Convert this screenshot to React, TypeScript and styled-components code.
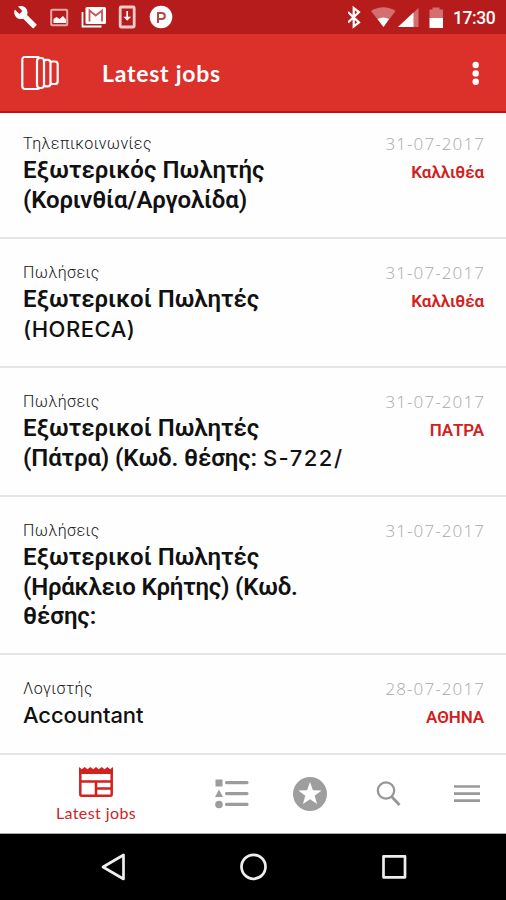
import React from "react";
import styled, { createGlobalStyle } from "styled-components";

const GlobalStyle = createGlobalStyle`
  * { box-sizing: border-box; }
  body { margin: 0; background: #fff; overflow: hidden; }
`;

const Screen = styled.div`
  width: 506px;
  height: 900px;
  display: flex;
  flex-direction: column;
  overflow: hidden;
  background: #fefefe;
  font-family: Roboto, "Noto Sans", sans-serif;
`;

const StatusBar = styled.div`
  height: 34px;
  flex: none;
  display: flex;
  justify-content: space-between;
  background: #b61c1c;
  color: #fff;
  svg { display: block; }
`;

const Clock = styled.span`
  width: 53px;
  padding: 8px 0 0 0;
  font-size: 17.5px;
  font-weight: 500;
  line-height: 20px;
  letter-spacing: -0.4px;
`;

const StatusRight = styled.div`
  display: flex;
`;

const AppBar = styled.header`
  height: 79px;
  flex: none;
  display: flex;
  align-items: center;
  padding: 0 20px 0 20px;
  background: #dc302b;
  border-bottom: 2px solid #c01612;
  color: #fff;
`;

const AppTitle = styled.h1`
  margin: 1px 0 0 42px;
  flex: 1;
  font-family: Lato, sans-serif;
  font-size: 23px;
  font-weight: 700;
  line-height: 28px;
  letter-spacing: 0.75px;
`;

const Jobs = styled.main`
  height: 642px;
  flex: none;
  overflow: hidden;
`;

const Job = styled.article<{ $height: number; $first?: boolean }>`
  height: ${(p) => p.$height}px;
  padding: ${(p) => (p.$first ? 21 : 24)}px 22px 0 23px;
  display: flex;
  justify-content: space-between;
  border-bottom: 2px solid #e5e5e5;
`;

const Details = styled.div`
  white-space: nowrap;
`;

const Category = styled.div`
  font-size: 16px;
  line-height: 20px;
  font-weight: 350;
  letter-spacing: 0.45px;
  color: #161616;
`;

const Title = styled.h2`
  margin: 2px 0 0;
  font-size: 24px;
  line-height: 29.5px;
  font-weight: 600;
  color: #111;
`;

const Line = styled.div<{ $spacing?: number }>`
  letter-spacing: ${(p) => p.$spacing ?? 0}px;
`;

const Latin = styled.span<{ $spacing?: number }>`
  font-family: Inter, Lato, sans-serif;
  font-size: 22px;
  font-weight: 500;
  letter-spacing: ${(p) => p.$spacing ?? 0}px;
`;

const Meta = styled.div`
  text-align: right;
  white-space: nowrap;
`;

const PostedOn = styled.div`
  margin-right: -1px;
  font-family: "Open Sans", sans-serif;
  font-weight: 300;
  font-size: 17px;
  line-height: 20px;
  letter-spacing: 1.1px;
  color: #a8a8a8;
`;

const City = styled.div`
  margin-top: 8px;
  font-size: 17px;
  line-height: 20px;
  font-weight: 600;
  letter-spacing: -0.1px;
  color: #d3201d;
`;

const TabBar = styled.nav`
  height: 79px;
  flex: none;
  display: grid;
  grid-template-columns: 192px 79px 78px 79px 78px;
  background: #fff;
  border-bottom: 1px solid #aaa;
`;

const Tab = styled.button`
  display: flex;
  flex-direction: column;
  align-items: center;
  justify-content: center;
  padding: 0;
  border: 0;
  background: none;
  color: #d3221e;
`;

const TabLabel = styled.span`
  margin-top: 4px;
  font-family: Lato, sans-serif;
  font-size: 16px;
  line-height: 21px;
  letter-spacing: 0.4px;
`;

const SystemBar = styled.footer`
  height: 66px;
  flex: none;
  background: #000;
`;

type TitleLine = { text: string; latin?: string; spacing?: number; latinSpacing?: number };

const jobs: { category: string; lines: TitleLine[]; date: string; city?: string; height: number }[] = [
  {
    category: "Τηλεπικοινωνίες",
    lines: [{ text: "Εξωτερικός Πωλητής", spacing: 0.03 }, { text: "(Κορινθία/Αργολίδα)", spacing: -0.13 }],
    date: "31-07-2017",
    city: "Καλλιθέα",
    height: 126,
  },
  {
    category: "Πωλήσεις",
    lines: [{ text: "Εξωτερικοί Πωλητές" }, { text: "", latin: "(HORECA)", latinSpacing: 0.5 }],
    date: "31-07-2017",
    city: "Καλλιθέα",
    height: 129,
  },
  {
    category: "Πωλήσεις",
    lines: [
      { text: "Εξωτερικοί Πωλητές" },
      { text: "(Πάτρα) (Κωδ. θέσης: ", spacing: -0.1, latin: "S-722/", latinSpacing: 1.5 },
    ],
    date: "31-07-2017",
    city: "ΠΑΤΡΑ",
    height: 129,
  },
  {
    category: "Πωλήσεις",
    lines: [
      { text: "Εξωτερικοί Πωλητές" },
      { text: "(Ηράκλειο Κρήτης) (Κωδ.", spacing: -0.2 },
      { text: "θέσης:", spacing: -0.05 },
    ],
    date: "31-07-2017",
    height: 158,
  },
  {
    category: "Λογιστής",
    lines: [{ text: "", latin: "Accountant", latinSpacing: -0.1 }],
    date: "28-07-2017",
    city: "ΑΘΗΝΑ",
    height: 100,
  },
];

const Notifications = () => (
  <svg width="180" height="34" viewBox="0 0 180 34" fill="none">
    <g transform="translate(13.2 4.8) scale(1.02)">
      <path fill="#fff" d="M22.7 19l-9.1-9.1c.9-2.3.4-5-1.5-6.9-2-2-5-2.4-7.4-1.3L9 6 6 9 1.6 4.7C.4 7.1.9 10.1 2.9 12.1c1.9 1.9 4.6 2.4 6.9 1.5l9.1 9.1c.4.4 1 .4 1.4 0l2.3-2.3c.5-.4.5-1.1.1-1.4z" />
    </g>
    <rect x="51.2" y="9.7" width="16" height="15.6" rx="1" stroke="#eba9a7" strokeWidth="2" />
    <path d="M53.500 23v-4l3-2 3 2 3.500-3 3 3.500V23z" fill="#fff" />
    <path d="M82.500 12v14.500h19" stroke="#fff" strokeWidth="1.800" />
    <rect x="85.500" y="7" width="20.500" height="17" rx="1.500" fill="#fff" />
    <path d="M89.500 21.500V10.500l6.200 5 6.300-5v11" stroke="#c85656" strokeWidth="1.800" />
    <rect x="120.200" y="7" width="14" height="20" rx="1" stroke="#f5cbc9" strokeWidth="2.800" />
    <path d="M127.200 11v8M125.300 17.500l1.900 2 1.900-2z" fill="#fff" stroke="#fff" strokeWidth="1.700" />
    <circle cx="161" cy="17" r="11.300" fill="#fff" />
    <path d="M158 23V13h3.800a3 3 0 0 1 0 6H158" stroke="#b84545" strokeWidth="2" />
  </svg>
);

const Connectivity = () => (
  <svg width="105" height="34" viewBox="348 0 105 34" fill="none">
    <path d="M348 12l11 10.500-5.300 4V8l5.300 4-11 10.500" stroke="#fff" strokeWidth="2.200" />
    <path d="M371 11q12.500-7.500 24.500 0L383.500 27z" fill="#d3706f" />
    <path d="M377.500 19q6-3 11.500 0L383.500 27z" fill="#fff" />
    <path d="M418.500 8v19H398z" fill="#d3706f" />
    <path d="M413.500 12.500V27H398z" fill="#fff" />
    <path d="M429.500 9.500h3V7.500h7v2h3.500V19h-13.500z" fill="#d3706f" />
    <path d="M429.500 18H443v10h-13.500z" fill="#fff" />
  </svg>
);

const BrandMark = () => (
  <svg width="40" height="36" viewBox="0 0 40 36" fill="#dc302b" stroke="#fff" strokeWidth="2.200">
    <rect x="2.300" y="2" width="17.500" height="32" rx="2.500" />
    <rect x="29.500" y="6.500" width="8.200" height="22.500" rx="2.800" />
    <rect x="23.500" y="4.800" width="7" height="26.500" rx="2.800" />
    <rect x="17" y="3" width="7" height="30" rx="3" />
  </svg>
);

const MoreIcon = () => (
  <svg width="20" height="28" viewBox="0 0 20 28" fill="#fff">
    <circle cx="9.700" cy="6" r="3.200" />
    <circle cx="9.700" cy="14.400" r="3.200" />
    <circle cx="9.700" cy="22.800" r="3.200" />
  </svg>
);

const NewspaperIcon = () => (
  <svg width="36" height="32" viewBox="0 0 36 32" fill="none">
    <path fill="#d3221e" d="M1 1l2.800 2.300L6.700 1l2.800 2.300L12.400 1l2.800 2.300L18 1l2.800 2.300L23.700 1l2.800 2.300L29.400 1l2.800 2.300L35 1v7H1z" />
    <path d="M2.300 4v24.200q0 1.500 1.500 1.500h28.400q1.500 0 1.500-1.500V4M2 15.500h32M18 15.500v14M18 22.500h16" stroke="#d3221e" strokeWidth="2.500" />
  </svg>
);

const ListIcon = () => (
  <svg width="36" height="32" viewBox="0 0 36 32" fill="#9c9c9c">
    <path d="M1.500 1.500h7v7h-7zM5 11.500l4 7.500H1z" />
    <circle cx="5" cy="26.500" r="3.800" />
    <path d="M12.500 4.600h20.500M12.500 15.600h20.500M12.500 26.400h20.500" stroke="#9c9c9c" strokeWidth="3.200" strokeLinecap="round" />
  </svg>
);

const StarIcon = () => (
  <svg width="36" height="36" viewBox="0 0 36 36">
    <circle cx="18" cy="18" r="17" fill="#9e9e9e" />
    <path fill="#fff" d="M18 6l2.900 8.200 8.700.2-6.900 5.300 2.400 8.300-7.100-4.800-7.100 4.800 2.400-8.300-6.900-5.300 8.700-.2z" />
  </svg>
);

const SearchIcon = () => (
  <svg width="26" height="26" viewBox="0 0 26 26" fill="none" stroke="#969696" strokeWidth="2.300">
    <circle cx="10" cy="9.500" r="8.200" />
    <path d="M15.500 15.500l8 8.500" strokeWidth="2.800" />
  </svg>
);

const MenuIcon = () => (
  <svg width="28" height="20" viewBox="0 0 28 20" stroke="#999" strokeWidth="2.700">
    <path d="M1 2.500h26M1 9.700h26M1 16.700h26" />
  </svg>
);

const SystemKeys = () => (
  <svg width="506" height="66" viewBox="0 834 506 66" fill="none" stroke="#eee" strokeWidth="2.700" strokeLinejoin="round">
    <path d="M123.500 855v24L103 867z" />
    <circle cx="253.500" cy="866.800" r="12" />
    <rect x="383.500" y="856.300" width="21.500" height="21" />
  </svg>
);

export default function App() {
  return (
    <Screen>
      <GlobalStyle />
      <StatusBar>
        <Notifications />
        <StatusRight>
          <Connectivity />
          <Clock>17:30</Clock>
        </StatusRight>
      </StatusBar>
      <AppBar>
        <BrandMark />
        <AppTitle>Latest jobs</AppTitle>
        <MoreIcon />
      </AppBar>
      <Jobs>
        {jobs.map((job, i) => (
          <Job key={i} $height={job.height} $first={i === 0}>
            <Details>
              <Category>{job.category}</Category>
              <Title>
                {job.lines.map((line, n) => (
                  <Line key={n} $spacing={line.spacing}>
                    {line.text}
                    {line.latin && <Latin $spacing={line.latinSpacing}>{line.latin}</Latin>}
                  </Line>
                ))}
              </Title>
            </Details>
            <Meta>
              <PostedOn>{job.date}</PostedOn>
              {job.city && <City>{job.city}</City>}
            </Meta>
          </Job>
        ))}
      </Jobs>
      <TabBar>
        <Tab>
          <NewspaperIcon />
          <TabLabel>Latest jobs</TabLabel>
        </Tab>
        <Tab aria-label="Categories"><ListIcon /></Tab>
        <Tab aria-label="Favourites"><StarIcon /></Tab>
        <Tab aria-label="Search"><SearchIcon /></Tab>
        <Tab aria-label="Menu"><MenuIcon /></Tab>
      </TabBar>
      <SystemBar>
        <SystemKeys />
      </SystemBar>
    </Screen>
  );
}
